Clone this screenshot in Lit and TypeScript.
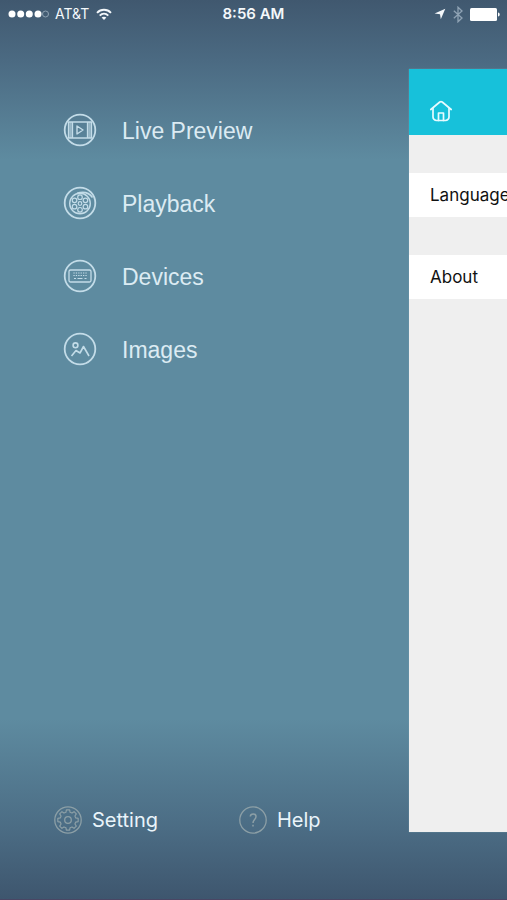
import { LitElement, html, css, svg } from "lit";
import { customElement } from "lit/decorators.js";

const ring = svg`<circle cx="17" cy="17" r="15.3" stroke-width="1.8"/>`;

const holes = [0, 60, 120, 180, 240, 300].map((a) => {
  const r = (a * Math.PI) / 180;
  return svg`<circle cx=${17 + 6.3 * Math.sin(r)} cy=${17.5 - 6.3 * Math.cos(r)} r="2.3" stroke-width="1.2"/>`;
});

const keys = [14, 16.5].flatMap((y) =>
  [11, 13.4, 15.8, 18.2, 20.6, 23].map(
    (x) => svg`<path d="M${x - 0.6} ${y}h1.3" stroke-width="1.1"/>`
  )
);

const menu = [
  {
    label: "Live Preview",
    icon: svg`${ring}
      <rect x="5.500" y="9" width="23" height="16" stroke-width="1.300"/>
      <path d="M9.500 9v16M24.500 9v16" stroke-width="1.300"/>
      <path d="M7.500 9v16M26.500 9v16" stroke-width="2.600" opacity=".6"/>
      <path d="M14 13v8l6-4z" stroke-width="1.400"/>`,
  },
  {
    label: "Playback",
    icon: svg`${ring}
      <circle cx="17" cy="17.500" r="10.300" stroke-width="1.400"/>
      <circle cx="17" cy="17.500" r="1.800" stroke-width="1.200"/>
      ${holes}
      <path d="M14 7.300C20 5.500 26 6.500 29.500 11.500" stroke-width="1.500"/>`,
  },
  {
    label: "Devices",
    icon: svg`${ring}
      <rect x="6" y="11" width="22" height="12" rx="1.500" stroke-width="1.300"/>
      ${keys}
      <path d="M11 19.500h2M14.500 19.500h5M21.500 19.500h2" stroke-width="1.200"/>`,
  },
  {
    label: "Images",
    icon: svg`${ring}
      <circle cx="12.500" cy="13.300" r="2.400" stroke-width="1.600"/>
      <path d="M8.500 24l4.500-5.500 4 2.500 3.500-6.500 5.500 9.500" stroke-width="1.600"/>`,
  },
];

const gear = (() => {
  const points: string[] = [];
  for (let i = 0; i < 8; i++) {
    const offsets: [number, number][] = [[-15, 8], [-9, 10.3], [9, 10.3], [15, 8]];
    for (const [o, r] of offsets) {
      const a = ((i * 45 + o) * Math.PI) / 180;
      points.push(`${(14 + r * Math.sin(a)).toFixed(2)} ${(14 - r * Math.cos(a)).toFixed(2)}`);
    }
  }
  return `M${points.join("L")}Z`;
})();

@customElement("status-bar")
class StatusBar extends LitElement {
  static styles = css`
    :host {
      display: grid;
      grid-template-columns: 1fr auto 1fr;
      align-items: center;
      height: 28px;
      padding: 0 7px;
      color: #f4f8fb;
      font: 14px/28px Inter, "Liberation Sans", sans-serif;
    }
    .side {
      display: flex;
      align-items: center;
      gap: 6px;
    }
    .end {
      justify-content: flex-end;
      gap: 7px;
    }
    .time {
      font-size: 15px;
      font-weight: 600;
    }
    svg {
      display: block;
      fill: none;
      stroke: none;
    }
  `;
  render() {
    return html`
      <div class="side">
        <svg width="42" height="10" viewBox="0 0 42 10" aria-label="Signal">
          <g fill="#fff">
            <circle cx="5" cy="5" r="3.500"/><circle cx="13.700" cy="5" r="3.500"/>
            <circle cx="22.300" cy="5" r="3.500"/><circle cx="31" cy="5" r="3.500"/>
          </g>
          <circle cx="38.500" cy="5" r="3" stroke="#8fa3b3"/>
        </svg>
        <span>AT&amp;T</span>
        <svg width="18" height="13" viewBox="0 0 18 13" aria-label="Wi-Fi">
          <g stroke="#f4f8fb" stroke-width="1.900">
            <path d="M2 4.800C6 .8 12 .8 16 4.800"/>
            <path d="M4.700 7.600C7.200 5.200 10.800 5.200 13.300 7.600"/>
          </g>
          <path d="M9 12L6.600 9.600C8 8.300 10 8.300 11.400 9.600Z" fill="#f4f8fb"/>
        </svg>
      </div>
      <span class="time">8:56 AM</span>
      <div class="side end">
        <svg width="12" height="12" viewBox="0 0 12 12" aria-label="Location">
          <path d="M11.300 .8L6.800 11.200 6 6.200 .6 5.600Z" fill="#f4f8fb"/>
        </svg>
        <svg width="10" height="17" viewBox="0 0 10 17" aria-label="Bluetooth">
          <path d="M.8 4.800L9 12 5 15.800V1.200L9 5 .8 12.200" stroke="#8fa3b4" stroke-width="1.300"/>
        </svg>
        <svg width="30" height="13" viewBox="0 0 30 13" aria-label="Battery">
          <rect x="0" y="0" width="27" height="13" rx="1.500" fill="#fff"/>
          <path d="M28 4.500C30.300 5 30.300 8 28 8.500Z" fill="#fff"/>
        </svg>
      </div>
    `;
  }
}

@customElement("settings-page")
class SettingsPage extends LitElement {
  static styles = css`
    :host {
      display: block;
      overflow: hidden;
      background: #efefef;
      box-shadow: 0 0 1px #7fa4b6;
      font: 17px/44px Inter, "Liberation Sans", sans-serif;
    }
    header {
      display: flex;
      align-items: flex-end;
      height: 66px;
      padding: 0 20px 12px;
      box-sizing: border-box;
      background: #17c1da;
    }
    button {
      border: 0;
      padding: 0;
      background: none;
      font: inherit;
    }
    .home svg {
      display: block;
    }
    .row {
      display: block;
      width: 100%;
      height: 44px;
      margin-top: 38px;
      padding: 0 21px;
      background: #fff;
      color: #111;
      text-align: left;
      white-space: nowrap;
    }
  `;
  render() {
    return html`
      <header>
        <button class="home" aria-label="Home">
          <svg width="24" height="24" viewBox="0 0 24 24" fill="none" stroke="#e6fbff"
            stroke-width="1.700" stroke-linejoin="round" stroke-linecap="round">
            <path d="M1.800 10.500L10.800 3Q12 2.100 13.200 3L22.200 10.500"/>
            <path d="M4 9.500V18a3.500 3.500 0 0 0 3.500 3.500h9A3.500 3.500 0 0 0 20 18V9.500"/>
            <path d="M9.500 21.500V14h5v7.500"/>
          </svg>
        </button>
      </header>
      <button class="row">Language</button>
      <button class="row">About</button>
    `;
  }
}

@customElement("app-root")
class AppRoot extends LitElement {
  static styles = css`
    :host {
      display: flex;
      flex-direction: column;
      min-height: 100vh;
      box-sizing: border-box;
      overflow: hidden;
      border-bottom: 1px solid #4a4664;
      color: #e9f4fa;
      font-family: Inter, "Liberation Sans", sans-serif;
      background: linear-gradient(#40586f, #4b6a82 60px, #5e8ba0 160px, #5e8ba0 calc(100% - 180px), #4b6c84 calc(100% - 70px), #3e566e);
    }
    main {
      flex: 1;
      display: grid;
      grid-template-columns: 1fr 98px;
    }
    .drawer {
      display: flex;
      flex-direction: column;
      justify-content: space-between;
      padding: 65px 0 59px;
    }
    settings-page {
      margin: 41px 0 67px;
    }
    ul {
      margin: 0;
      padding: 0 0 0 63px;
      list-style: none;
    }
    a {
      display: flex;
      align-items: center;
      color: inherit;
      text-decoration: none;
      white-space: nowrap;
    }
    .item {
      gap: 25px;
      height: 73px;
      font-family: "Liberation Sans", Arial, sans-serif;
      font-size: 23px;
      font-weight: 300;
      color: #dcebf3;
    }
    .item span {
      padding-top: 4px;
    }
    svg {
      flex: none;
      fill: none;
      stroke: #c3dce8;
      stroke-linejoin: round;
    }
    .tools {
      display: grid;
      grid-template-columns: 185px auto;
      padding-left: 54px;
    }
    .tool {
      gap: 10px;
      height: 40px;
      font-size: 20px;
    }
    .tool svg {
      stroke: #8c9fa6;
    }
  `;
  render() {
    return html`
      <status-bar></status-bar>
      <main>
        <nav class="drawer">
          <ul>
            ${menu.map(
              (m) => html`<li>
                <a class="item" href="#">
                  <svg width="34" height="34" viewBox="0 0 34 34" aria-hidden="true">${m.icon}</svg>
                  <span>${m.label}</span>
                </a>
              </li>`
            )}
          </ul>
          <div class="tools">
            <a class="tool" href="#">
              <svg width="28" height="28" viewBox="0 0 28 28" aria-hidden="true">
                <circle cx="14" cy="14" r="13.200" stroke-width="1.300"/>
                <path d=${gear} stroke-width="1.200"/>
                <circle cx="14" cy="14" r="3.300" stroke-width="1.300"/>
              </svg>
              <span>Setting</span>
            </a>
            <a class="tool" href="#">
              <svg width="28" height="28" viewBox="0 0 28 28" aria-hidden="true">
                <circle cx="14" cy="14" r="13.200" stroke-width="1.300"/>
                <path d="M11.300 10.500C11.500 7 17 7 17 10.500C17 13.500 14 13.500 14 17M14 18.800v1.800" stroke-width="1.500"/>
              </svg>
              <span>Help</span>
            </a>
          </div>
        </nav>
        <settings-page></settings-page>
      </main>
    `;
  }
}
